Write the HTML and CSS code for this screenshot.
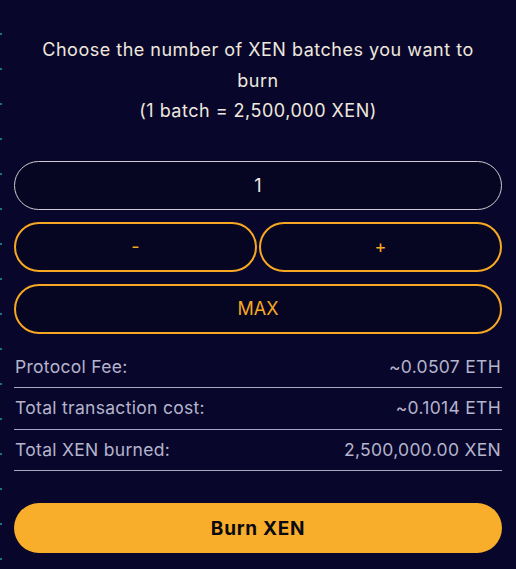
FILE: index.html
```html
<!DOCTYPE html>
<html lang="en">
<head>
<meta charset="utf-8">
<title>Burn XEN</title>
<link rel="stylesheet" href="styles.css">
</head>
<body>
<div class="edge"></div>
<main class="panel">
  <h2 class="title">Choose the number of XEN batches you want to burn<br>(1 batch = 2,500,000 XEN)</h2>
  <div class="controls">
    <input class="amount" type="text" value="1">
    <div class="steps">
      <button class="btn-outline">-</button>
      <button class="btn-outline">+</button>
    </div>
    <button class="btn-outline">MAX</button>
  </div>
  <dl class="summary">
    <div class="row"><dt>Protocol Fee:</dt><dd>~0.0507 ETH</dd></div>
    <div class="row"><dt>Total transaction cost:</dt><dd>~0.1014 ETH</dd></div>
    <div class="row"><dt>Total XEN burned:</dt><dd>2,500,000.00 XEN</dd></div>
  </dl>
  <button class="btn-burn">Burn XEN</button>
</main>
</body>
</html>
```
FILE: styles.css
```css
html, body {
  margin: 0;
  padding: 0;
  background: #08072b;
  height: 100%;
}
body {
  font-family: Inter, "Noto Sans", sans-serif;
  position: relative;
  overflow: hidden;
}
.edge {
  position: absolute;
  left: 0;
  top: 0;
  bottom: 0;
  width: 2px;
  background: repeating-linear-gradient(to bottom, transparent 0, transparent 33px, #1aa3a8 33px, #1aa3a8 35px);
  opacity: 0.7;
}
.panel {
  padding: 35px 14px 0;
  display: flex;
  flex-direction: column;
}
.title {
  margin: 0 0 34px;
  padding: 0 16px;
  text-align: center;
  font-size: 18px;
  line-height: 30.5px;
  font-weight: 400;
  letter-spacing: 0.5px;
  color: #efe7de;
}
.controls {
  display: flex;
  flex-direction: column;
  gap: 12px;
}
.amount {
  box-sizing: border-box;
  height: 49px;
  width: 100%;
  border: 1px solid #cfcbd0;
  border-radius: 25px;
  background: #060522;
  color: #f2ece6;
  font-family: inherit;
  font-size: 18px;
  text-align: center;
  outline: none;
}
.steps {
  display: flex;
  gap: 2px;
}
.steps .btn-outline {
  flex: 1;
}
.btn-outline {
  box-sizing: border-box;
  height: 50px;
  border: 2px solid #f7a823;
  border-radius: 25px;
  background: #060522;
  color: #f7a823;
  font-family: inherit;
  font-size: 18px;
  padding: 0;
}
.summary {
  margin: 13px 0 32px;
  padding: 0;
}
.row {
  display: flex;
  justify-content: space-between;
  padding: 10px 1px 10px;
  line-height: 20.5px;
  border-bottom: 1px solid #a9a8c4;
  color: #b5b4cd;
  font-size: 17.5px;
  letter-spacing: 0.3px;
}
.row dt, .row dd {
  margin: 0;
}
.btn-burn {
  box-sizing: border-box;
  height: 50px;
  width: 100%;
  border: none;
  border-radius: 25px;
  background: #f8ae2a;
  color: #0b0a12;
  font-family: inherit;
  font-size: 19px;
  font-weight: 700;
  letter-spacing: 0.7px;
}
```
